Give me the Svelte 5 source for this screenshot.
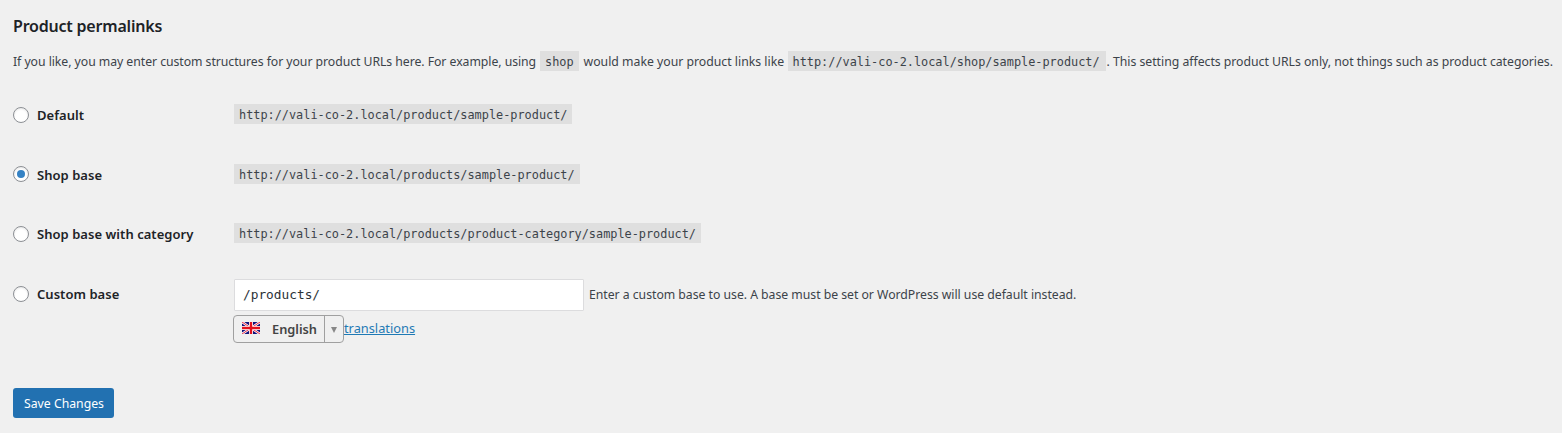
<script>
	let selected = 'shop';
	let customBase = '/products/';

	const home = 'http://vali-co-2.local';

	const structures = [
		{ id: 'default', label: 'Default', url: home + '/product/sample-product/' },
		{ id: 'shop', label: 'Shop base', url: home + '/products/sample-product/' },
		{ id: 'category', label: 'Shop base with category', url: home + '/products/product-category/sample-product/' }
	];
</script>

<form on:submit|preventDefault>
	<h2>Product permalinks</h2>
	<p class="intro">
		<span class="lead">If you like, you may enter custom structures for your product URLs here. For example, using</span>
		<code>shop</code>
		<span class="middle">would make your product links like</span>
		<code class="example">{home}/shop/sample-product/</code>
		<span class="tail">. This setting affects product URLs only, not things such as product categories.</span>
	</p>

	<div class="table">
		{#each structures as item}
			<div class="row {item.id}">
				<label class="choice {item.id}">
					<input type="radio" bind:group={selected} value={item.id} />
					<span>{item.label}</span>
				</label>
				<code>{item.url}</code>
			</div>
		{/each}

		<div class="row custom">
			<label class="choice custom">
				<input type="radio" bind:group={selected} value="custom" />
				<span>Custom base</span>
			</label>
			<div>
				<div class="field">
					<input class="text" type="text" bind:value={customBase} spellcheck="false" />
					<span class="description">Enter a custom base to use. A base must be set or WordPress will use default instead.</span>
				</div>
				<div class="language">
					<button class="switcher" type="button">
						<svg class="flag" viewBox="0 0 18 12" width="18" height="12">
							<path fill="#12127c" d="M0 0h18v12H0z" />
							<path stroke="#fff" stroke-width="2.4" d="M0 0l18 12M18 0L0 12" />
							<path stroke="#e8112d" stroke-width=".9" d="M0 0l18 12M18 0L0 12" />
							<path stroke="#fff" stroke-width="4" d="M9 0v12M0 6h18" />
							<path stroke="#e3101c" stroke-width="2.4" d="M9 0v12M0 6h18" />
						</svg>
						<span class="name">English</span>
						<span class="arrow">
							<svg viewBox="0 0 6 6" width="6" height="6"><path fill="#888" d="M0 0h6L3 6z" /></svg>
						</span>
					</button>
					<a href="#translations">translations</a>
				</div>
			</div>
		</div>
	</div>

	<button class="save" type="submit">Save Changes</button>
</form>

<style>
	:global(body) {
		background: #f0f0f0;
	}

	form {
		box-sizing: border-box;
		height: 433px;
		padding: 15px 0 0 13px;
		overflow: hidden;
		color: #3c434a;
		font: 12.25px/20px "Noto Sans", sans-serif;
		white-space: nowrap;
	}

	h2 {
		height: 22px;
		margin: 0;
		color: #1d2327;
		font-size: 16px;
		font-weight: 600;
		line-height: 22px;
		letter-spacing: -0.21px;
	}

	.intro {
		display: flex;
		height: 20px;
		margin: 14px 0 13px;
	}

	.intro span {
		padding-top: 1px;
	}

	.intro .lead {
		width: 527px;
		letter-spacing: -0.048px;
	}

	.intro .middle {
		width: 204px;
		padding-left: 5px;
	}

	.intro .tail {
		padding-left: 1px;
		letter-spacing: -0.02px;
	}

	code {
		height: 20px;
		padding: 0 5px;
		box-sizing: border-box;
		background: #dfdfdf;
		font-family: "DejaVu Sans Mono", monospace;
		font-size: 11.87px;
		line-height: 22px;
	}

	.example {
		width: 318px;
	}

	.row {
		display: grid;
		grid-template-columns: 221px max-content;
		align-items: start;
		height: 60px;
		padding-top: 20px;
		box-sizing: border-box;
	}

	.row.shop {
		height: 59px;
	}

	.row.custom {
		height: 125px;
		padding-top: 16px;
	}

	.choice {
		display: flex;
		align-items: center;
		height: 22px;
		color: #1d2327;
		font-size: 13px;
		font-weight: 600;
		letter-spacing: 0.04px;
	}

	.choice.shop {
		height: 20px;
	}

	.choice.category {
		height: 21px;
	}

	.choice.category span {
		padding-top: 1px;
	}

	.choice.shop span {
		padding-top: 2px;
	}

	.choice.custom {
		height: 30px;
	}

	.choice input {
		appearance: none;
		display: flex;
		align-items: center;
		justify-content: center;
		box-sizing: border-box;
		width: 16px;
		height: 16px;
		margin: 0 8px 0 0;
		border: 1px solid #8c8f94;
		border-radius: 50%;
		background: #fff;
		box-shadow: inset 0 1px 2px rgba(0, 0, 0, 0.1);
	}

	.choice input:checked::before {
		content: "";
		width: 8px;
		height: 8px;
		border-radius: 50%;
		background: #3582c4;
	}

	.field {
		display: flex;
		align-items: center;
		gap: 5px;
	}

	.description {
		letter-spacing: -0.03px;
	}

	.text {
		box-sizing: border-box;
		width: 350px;
		height: 32px;
		padding: 0 8px 2px;
		border: 1px solid #dcdcde;
		border-radius: 1px;
		background: #fff;
		color: #2c3338;
		font-family: "DejaVu Sans Mono", monospace;
		font-size: 12.8px;
	}

	.language {
		display: flex;
		margin: 4px 0 0 -1px;
	}

	.switcher {
		display: flex;
		align-items: center;
		box-sizing: border-box;
		width: 111px;
		height: 28px;
		padding: 0 0 0 8px;
		border: 1px solid #a0a0a0;
		border-radius: 4px;
		background: #f0f0f0;
		color: #444;
		font: 600 12.8px/26px "Noto Sans", sans-serif;
	}

	.flag {
		margin: 0 12px 2px 0;
	}

	.name {
		width: 52px;
		text-align: left;
	}

	.arrow {
		display: flex;
		flex: 1;
		align-items: center;
		justify-content: center;
		height: 26px;
		border-left: 1px solid #a0a0a0;
	}

	.arrow svg {
		margin: 2px 1px 0 0;
	}

	a {
		color: #1f7ab5;
		font-size: 12.8px;
		line-height: 26px;
	}

	.save {
		width: 101px;
		height: 30px;
		padding: 1px 0 0 1px;
		border: 0;
		border-radius: 3px;
		background: #2271b1;
		color: #fff;
		font: 12.25px/29px "Noto Sans", sans-serif;
	}
</style>
